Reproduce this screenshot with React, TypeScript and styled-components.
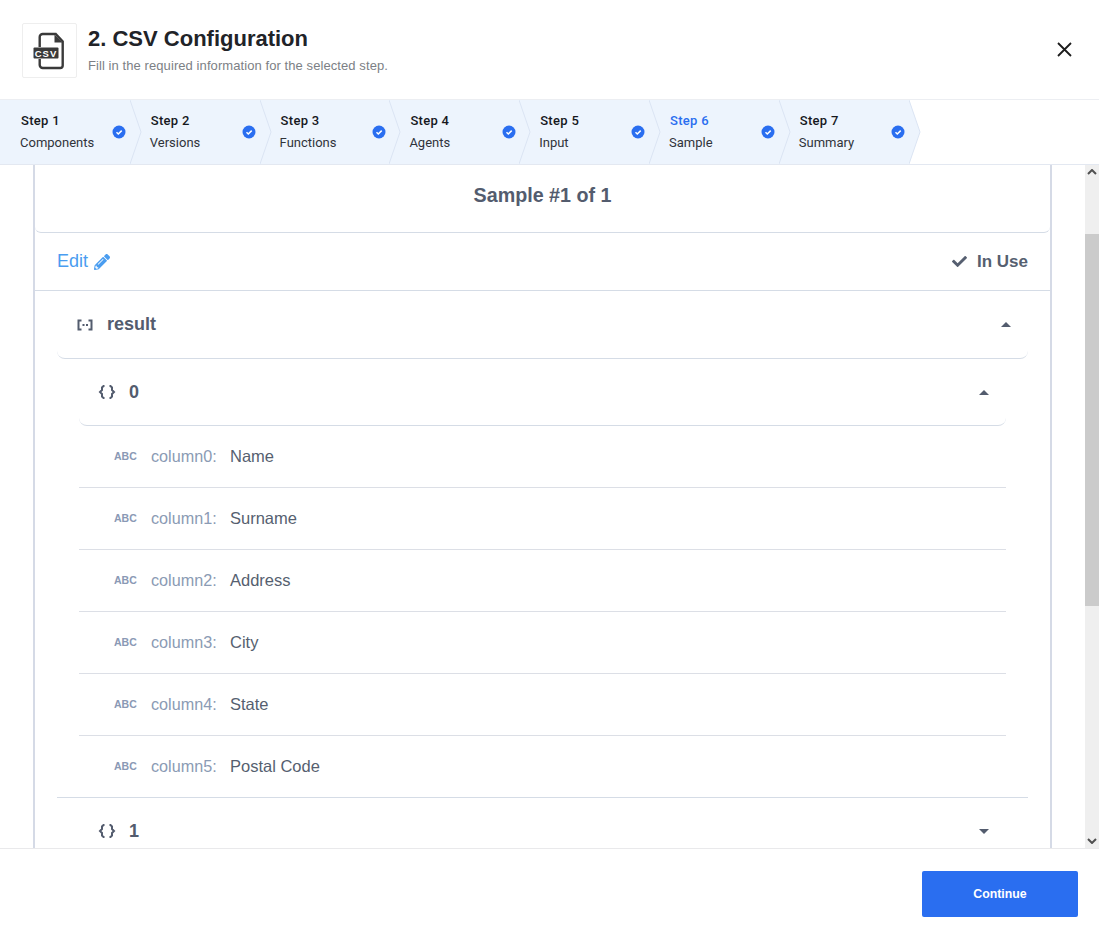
import styled, { createGlobalStyle } from "styled-components";
import { FaCheck, FaPencilAlt } from "react-icons/fa";

const GlobalStyle = createGlobalStyle`
  html, body {
    margin: 0;
    padding: 0;
    background: #fff;
    font-family: "Liberation Sans", Arial, sans-serif;
  }
`;

const Page = styled.div`
  height: 938px;
  display: flex;
  flex-direction: column;
  overflow: hidden;
`;

const Header = styled.header`
  height: 100px;
  flex: none;
  display: flex;
  align-items: flex-start;
  padding: 23px 27px 0 22px;
  box-sizing: border-box;
  border-bottom: 1px solid #eceef2;
`;

const IconBox = styled.div`
  width: 55px;
  height: 55px;
  border: 1px solid #eeeeee;
  border-radius: 2px;
  box-sizing: border-box;
  display: flex;
  align-items: center;
  justify-content: center;
  margin-right: 11px;
`;

const HeaderText = styled.div`
  flex: 1;
`;

const Title = styled.h1`
  margin: 3px 0 0;
  font-size: 22px;
  line-height: 26px;
  font-weight: 700;
  color: #212328;
`;

const Subtitle = styled.p`
  margin: 7px 0 0;
  font-size: 13px;
  line-height: 14px;
  letter-spacing: 0.08px;
  color: #7c7f85;
`;

const CloseButton = styled.button`
  border: none;
  background: none;
  padding: 0;
  margin-top: 19px;
  width: 15px;
  height: 15px;
  display: block;
`;

const Stepper = styled.nav`
  height: 65px;
  flex: none;
  box-sizing: border-box;
  border-bottom: 1px solid #e3e8f1;
  display: flex;
`;

const Step = styled.div`
  position: relative;
  width: 129.8px;
  flex: none;
  height: 64px;
  background: #edf4fd;
  box-sizing: border-box;
  padding: 13px 0 0 20px;
`;

const StepTitle = styled.div<{ $active?: boolean }>`
  font-family: Roboto, sans-serif;
  font-size: 13px;
  line-height: 16px;
  font-weight: 500;
  letter-spacing: 0.3px;
  margin-left: 1px;
  color: ${(p) => (p.$active ? "#2a6ef0" : "#16181d")};
`;

const StepLabel = styled.div`
  font-family: Roboto, sans-serif;
  font-size: 13px;
  line-height: 16px;
  margin-top: 6px;
  color: #30333a;
`;

const StepCheck = styled.svg`
  position: absolute;
  right: 3.5px;
  top: 25px;
  width: 14px;
  height: 14px;
`;

const StepArrow = styled.svg`
  position: absolute;
  z-index: 1;
  left: 100%;
  top: 0;
  width: 12px;
  height: 64px;
`;

const Body = styled.div`
  flex: 1;
  min-height: 0;
  display: flex;
`;

const ScrollArea = styled.main`
  flex: 1;
  overflow: hidden;
  padding: 0 33px;
`;

const Card = styled.section`
  border-left: 2px solid #d5dae6;
  border-right: 2px solid #d5dae6;
`;

const SampleTitle = styled.h2`
  margin: 0;
  height: 68px;
  box-sizing: border-box;
  border-bottom: 1px solid #d5dce6;
  border-radius: 0 0 6px 6px;
  display: flex;
  align-items: center;
  justify-content: center;
  padding-bottom: 6px;
  font-size: 19.7px;
  font-weight: 700;
  color: #535c6e;
`;

const ActionBar = styled.div`
  height: 58px;
  box-sizing: border-box;
  border-bottom: 1px solid #d5dce6;
  padding: 0 22px 0 23px;
  display: flex;
  align-items: center;
  justify-content: space-between;
`;

const EditLink = styled.a`
  display: flex;
  align-items: center;
  gap: 6px;
  margin-left: -1px;
  font-size: 18px;
  color: #4a9df0;
`;

const InUse = styled.div`
  display: flex;
  align-items: center;
  gap: 10px;
  font-size: 17px;
  font-weight: 700;
  color: #565f70;
`;

const Nest = styled.div`
  padding: 0 22px;
`;

const NodeHeader = styled.div<{ $inner?: boolean }>`
  height: ${(p) => (p.$inner ? "67px" : "68px")};
  box-sizing: border-box;
  border-bottom: 1px solid #d5dce6;
  border-radius: 0 0 8px 8px;
  display: flex;
  align-items: center;
  padding: 0 17px 0 19px;
  font-size: 18px;
  font-weight: 700;
  color: #535c6e;
`;

const NodeIcon = styled.svg`
  width: 18px;
  height: 14px;
  margin-right: 13px;
  color: #535c6e;
  flex: none;
`;

const NodeName = styled.span`
  flex: 1;
`;

const Caret = styled.span<{ $open?: boolean }>`
  width: 0;
  height: 0;
  border-left: 5px solid transparent;
  border-right: 5px solid transparent;
  ${(p) =>
    p.$open
      ? "border-bottom: 5px solid #535c6e;"
      : "border-top: 5px solid #535c6e;"}
`;

const Group = styled.div`
  height: 371px;
`;

const GroupRule = styled.div`
  border-bottom: 1px solid #d5dce6;
  margin: 0 -22px;
`;

const Field = styled.div`
  height: 62px;
  box-sizing: border-box;
  border-bottom: 1px solid #dcdfe6;
  padding: 0 0 1px 35px;
  display: flex;
  align-items: center;

  &:last-child {
    border-bottom: none;
    height: 61px;
  }
`;

const TypeTag = styled.span`
  width: 37px;
  flex: none;
  font-size: 10.5px;
  font-weight: 700;
  color: #8a99b5;
`;

const FieldKey = styled.span`
  width: 79px;
  flex: none;
  font-size: 16.2px;
  color: #8b9bb4;
`;

const FieldValue = styled.span`
  font-size: 16.5px;
  color: #565f70;
`;

const Scrollbar = styled.div`
  width: 14px;
  flex: none;
  background: #efefef;
  display: flex;
  flex-direction: column;
  align-items: center;
`;

const ScrollArrow = styled.svg<{ $bottom?: boolean }>`
  width: 10px;
  height: 6px;
  flex: none;
  margin-top: ${(p) => (p.$bottom ? "auto" : "4px")};
  margin-bottom: ${(p) => (p.$bottom ? "4px" : "0")};
`;

const ScrollThumb = styled.div`
  width: 100%;
  height: 372px;
  margin-top: 59px;
  background: #cbcbcb;
`;

const Footer = styled.footer`
  height: 90px;
  flex: none;
  box-sizing: border-box;
  border-top: 1px solid #e9e9eb;
  padding: 22px 21px 0 0;
  display: flex;
  justify-content: flex-end;
  align-items: flex-start;
`;

const ContinueButton = styled.button`
  width: 156px;
  height: 46px;
  border: none;
  border-radius: 2px;
  padding: 0;
  background: #2a6ef0;
  color: #fff;
  font-family: "Liberation Sans", Arial, sans-serif;
  font-size: 12.3px;
  font-weight: 700;
`;

const steps = [
  "Components",
  "Versions",
  "Functions",
  "Agents",
  "Input",
  "Sample",
  "Summary",
];

const columns = ["Name", "Surname", "Address", "City", "State", "Postal Code"];

function CsvIcon() {
  return (
    <svg width="34" height="38" viewBox="0 0 34 38">
      <path
        d="M6.700 15V5a3 3 0 0 1 3-3h13l7 7.500V33.500a2.500 2.500 0 0 1-2.500 2.500H9.700a3 3 0 0 1-3-3v-6"
        fill="none"
        stroke="#3a3a3a"
        strokeWidth="2.400"
      />
      <path d="M21.500 2.500V10.500h8z" fill="#3a3a3a" />
      <rect x="0.500" y="15.500" width="25" height="11" rx="1" fill="#3a3a3a" />
      <text
        x="13"
        y="24.600"
        textAnchor="middle"
        fontFamily="Liberation Sans, sans-serif"
        fontSize="9.500"
        fontWeight="700"
        letterSpacing="1"
        fill="#fff"
      >
        CSV
      </text>
    </svg>
  );
}

function ArrayIcon() {
  return (
    <NodeIcon viewBox="0 0 18 14">
      <path
        d="M5.500 2.500H2.500v9h3M12.500 2.500h3v9h-3"
        fill="none"
        stroke="currentColor"
        strokeWidth="2"
      />
      <rect x="6.500" y="6" width="2" height="2" fill="currentColor" />
      <rect x="10" y="6" width="2" height="2" fill="currentColor" />
    </NodeIcon>
  );
}

function ObjectIcon() {
  return (
    <NodeIcon viewBox="0 0 18 14">
      <path
        d="M6.500 1H5.500L4 2.500V5L2 7l2 2v2.500L5.500 13h1M11.500 1h1L14 2.500V5l2 2-2 2v2.500L12.500 13h-1"
        fill="none"
        stroke="currentColor"
        strokeWidth="2"
      />
    </NodeIcon>
  );
}

function App() {
  return (
    <Page>
      <GlobalStyle />
      <Header>
        <IconBox>
          <CsvIcon />
        </IconBox>
        <HeaderText>
          <Title>2. CSV Configuration</Title>
          <Subtitle>Fill in the required information for the selected step.</Subtitle>
        </HeaderText>
        <CloseButton aria-label="Close">
          <svg width="15" height="15" viewBox="0 0 15 15">
            <path d="M1 1l13 13M14 1 1 14" stroke="#1c1c1c" strokeWidth="1.800" />
          </svg>
        </CloseButton>
      </Header>

      <Stepper>
        {steps.map((label, i) => (
          <Step key={label}>
            <StepTitle $active={i === 5}>Step {i + 1}</StepTitle>
            <StepLabel>{label}</StepLabel>
            <StepCheck viewBox="0 0 14 14">
              <circle cx="7" cy="7" r="6.500" fill="#2a6ef0" />
              <path
                d="M4.500 7.200 6.300 9l3.400-3.400"
                fill="none"
                stroke="#fff"
                strokeWidth="1.500"
              />
            </StepCheck>
            <StepArrow viewBox="0 0 12 64">
              <path d="M0 0 11 32 0 64z" fill="#edf4fd" />
              <path d="M0 0 11 32 0 64" fill="none" stroke="#dbe4f3" />
            </StepArrow>
          </Step>
        ))}
      </Stepper>

      <Body>
        <ScrollArea>
          <Card>
            <SampleTitle>Sample #1 of 1</SampleTitle>
            <ActionBar>
              <EditLink>
                Edit <FaPencilAlt size={16} />
              </EditLink>
              <InUse>
                <FaCheck size={15} /> In Use
              </InUse>
            </ActionBar>
            <Nest>
              <NodeHeader>
                <ArrayIcon />
                <NodeName>result</NodeName>
                <Caret $open />
              </NodeHeader>
              <Nest>
                <NodeHeader $inner>
                  <ObjectIcon />
                  <NodeName>0</NodeName>
                  <Caret $open />
                </NodeHeader>
                <Group>
                  {columns.map((value, i) => (
                    <Field key={value}>
                      <TypeTag>ABC</TypeTag>
                      <FieldKey>column{i}:</FieldKey>
                      <FieldValue>{value}</FieldValue>
                    </Field>
                  ))}
                </Group>
                <GroupRule />
                <NodeHeader $inner>
                  <ObjectIcon />
                  <NodeName>1</NodeName>
                  <Caret />
                </NodeHeader>
              </Nest>
            </Nest>
          </Card>
        </ScrollArea>
        <Scrollbar>
          <ScrollArrow viewBox="0 0 10 6">
            <path d="M1 5l4-4 4 4" fill="none" stroke="#505050" strokeWidth="2" />
          </ScrollArrow>
          <ScrollThumb />
          <ScrollArrow $bottom viewBox="0 0 10 6">
            <path d="M1 1l4 4 4-4" fill="none" stroke="#505050" strokeWidth="2" />
          </ScrollArrow>
        </Scrollbar>
      </Body>

      <Footer>
        <ContinueButton>Continue</ContinueButton>
      </Footer>
    </Page>
  );
}

export default App;
